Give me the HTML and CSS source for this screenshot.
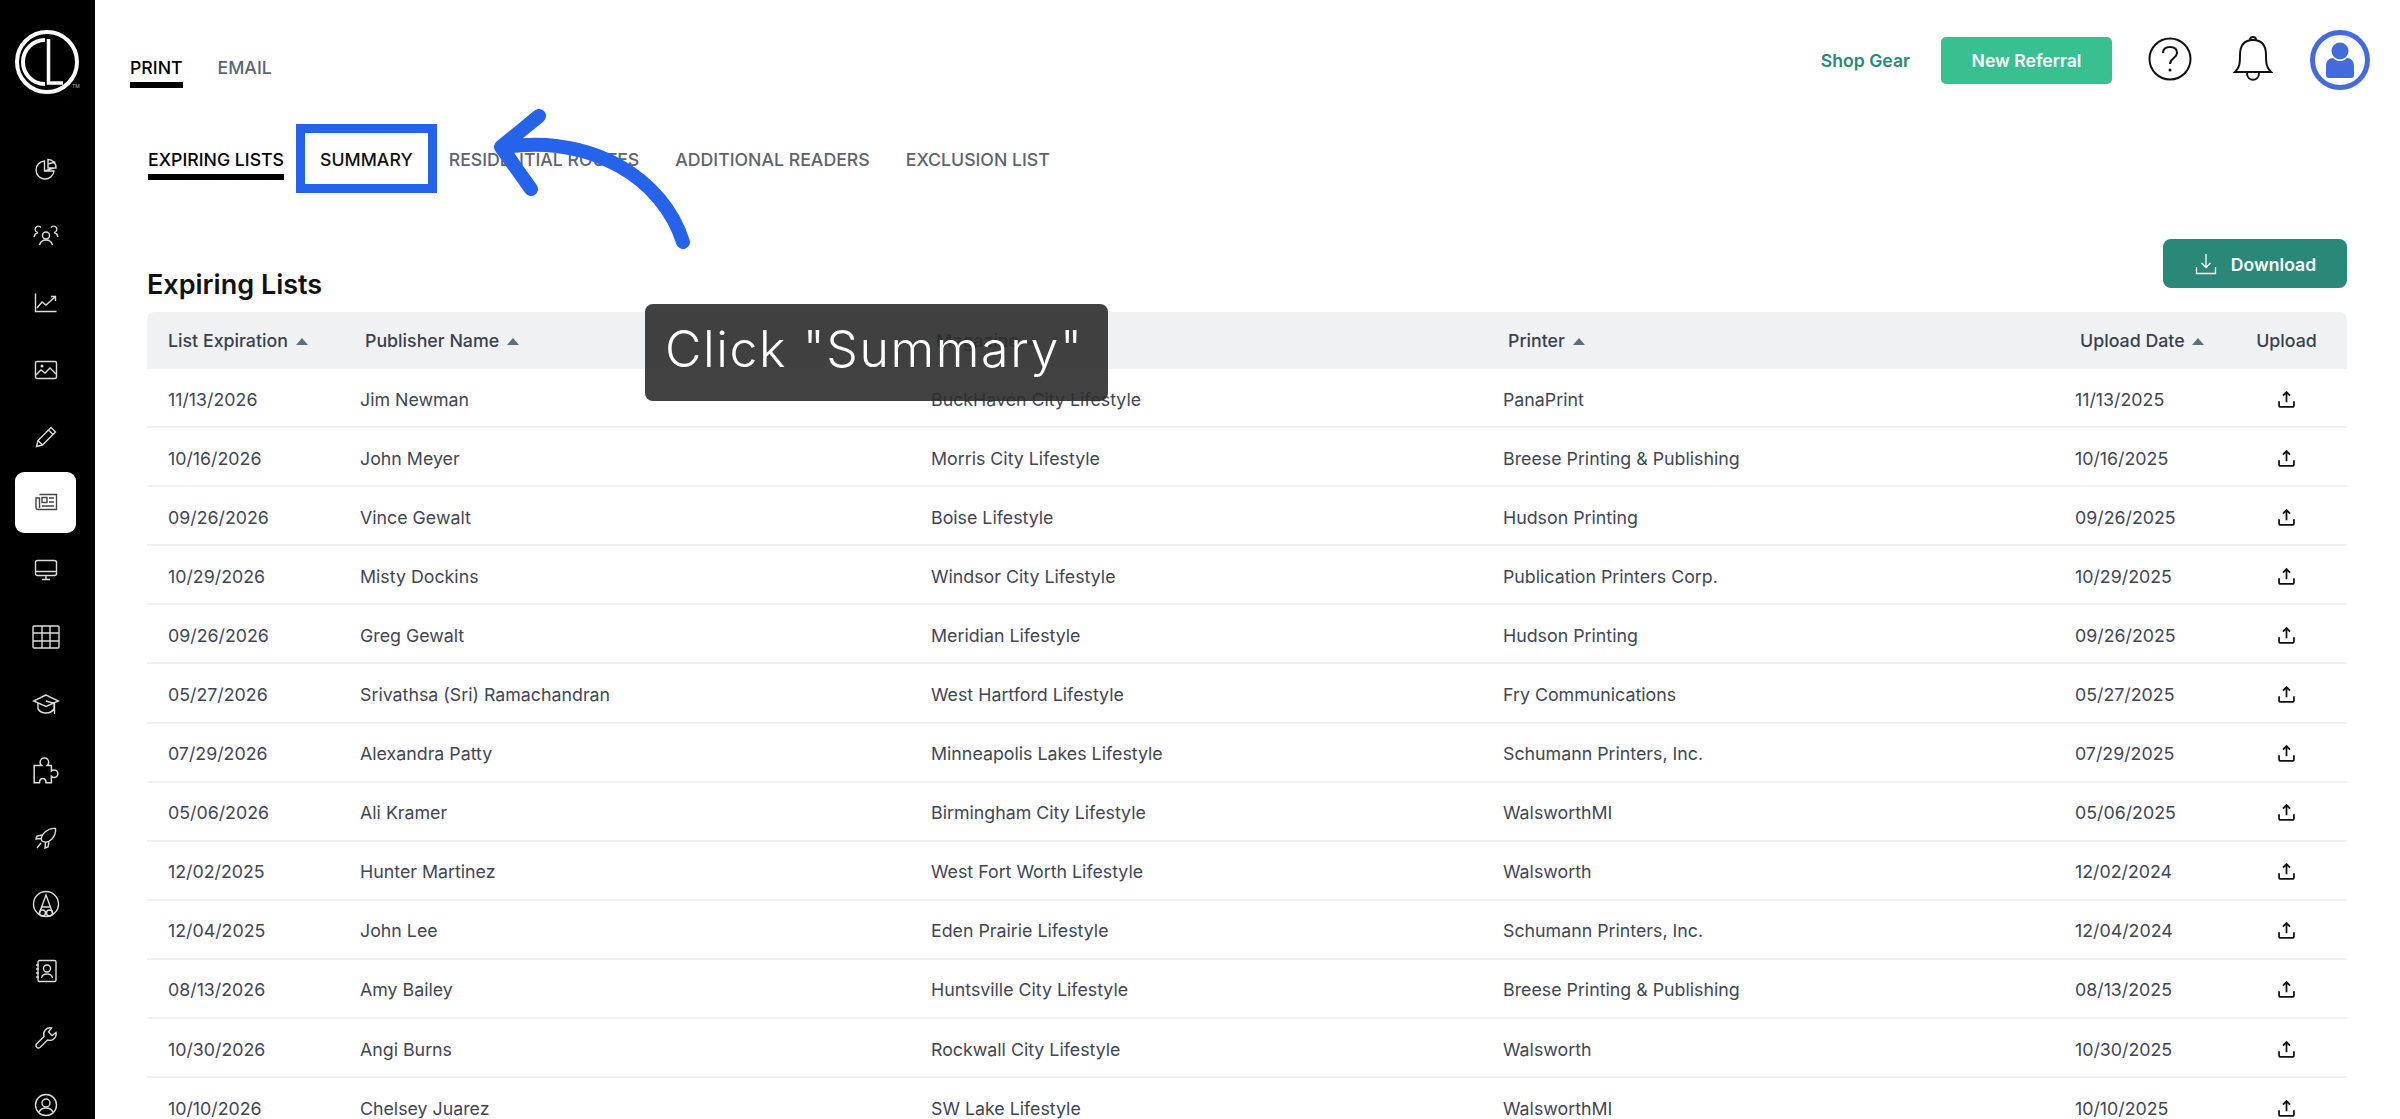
FILE: index.html
```html
<!DOCTYPE html>
<html lang="en">

<head>
    <meta charset="UTF-8">
    <title>Expiring Lists</title>
    <link rel="stylesheet" href="styles.css">
</head>

<body>
    <svg class="sprite" width="0" height="0">
        <symbol id="up" viewBox="0 0 24 24">
            <path d="M12 15V4M8 7.500 12 3.500l4 4M3.500 14v4.500a2 2 0 0 0 2 2h13a2 2 0 0 0 2-2V14" fill="none" stroke="currentColor" stroke-width="2" />
        </symbol>
    </svg>

    <!-- Sidebar -->
    <nav class="sidebar">
        <div class="logo">
            <svg viewBox="0 0 72 68" width="72" height="68" fill="none" stroke="#fff">
                <circle cx="33" cy="33" r="30" stroke-width="4" />
                <path d="M31 11A22 22 0 0 0 31 55" stroke-width="4" />
                <path d="M34.500 10v44H49" stroke-width="3.500" />
                <text x="58" y="59" class="tm">TM</text>
            </svg>
        </div>
        <ul class="nav-list">
            <li><svg viewBox="0 0 24 24"><path d="M10.500 4a9 9 0 1 0 9.500 10h-9.500zM14 2.500a8 8 0 0 1 8 8.500h-8zM14 7l7.500-2M10.500 14l9.500-3" /></svg></li>
            <li><svg viewBox="0 0 28 28" class="wide"><circle cx="14" cy="13.500" r="3.500" /><path d="M7.500 23c1-3.500 3.500-5 6.500-5s5.500 1.500 6.500 5M9 5.500a3.200 3.200 0 1 0-3 5c-2 .5-3.500 2-4 4.500M19 5.500a3.200 3.200 0 1 1 3 5c2 .5 3.500 2 4 4.500" /></svg></li>
            <li><svg viewBox="0 0 24 24"><path d="M1.500 2.500v18h21M3 17l5-6 4 3 9-8M17 5.500h4.500V10" /></svg></li>
            <li><svg viewBox="0 0 24 24"><rect x="1.500" y="3.500" width="21" height="17" rx="1.500" /><path d="M2 17l5-5 4 3 5-5 6 6" /><circle cx="8" cy="8" r=".8" /></svg></li>
            <li><svg viewBox="0 0 24 24"><path d="M2.500 21.500l1.500-6L17 2.500l4.500 4.500L8.500 20zM4 15.500 8.500 20M14.500 5l4.500 4.500" /></svg></li>
            <li class="active"><svg viewBox="0 0 24 24"><path d="M5.500 4.500h17v15H4a2 2 0 0 1-2-2V8h3.500v10" /><rect x="8" y="7.500" width="5" height="5" /><path d="M15 8h5M15 12h5M8 16h12" /></svg></li>
            <li><svg viewBox="0 0 24 24"><rect x="1.500" y="2.500" width="21" height="15" rx="2" /><path d="M1.500 13.500h21M12 17.500v4M8 21.500h8" /></svg></li>
            <li><svg viewBox="0 0 28 24" class="wide"><rect x="1" y="1" width="26" height="22" rx="1" /><path d="M10 1v22M18 1v22M1 8h26M1 16h26" /></svg></li>
            <li><svg viewBox="0 0 28 24" class="wide"><path d="M14 3 1.500 9 14 14.500 26.500 9zM6 11.500V17c2 3 5 4 8 4s6-1 8-4v-5.500M14 9l8.500 2.500V22" /></svg></li>
            <li><svg viewBox="0 0 26 26" class="wide"><path d="M2 8h7c-1-1-1.500-2-1.500-3a4 4 0 0 1 8 0c0 1-.5 2-1.500 3h4v5c1-1 1.500-1 2.500-1a3.500 3.500 0 0 1 0 7c-1 0-1.500 0-2.500-1v6h-5c0-2-1-4-3-4s-3 2-3 4H2z" /></svg></li>
            <li><svg viewBox="0 0 24 24"><path d="M8 15c-2-3 0-6 3-9 3-2.500 7-4 10.500-3.500C22 6 20.500 10 18 13c-3 3-6 4.500-10 2zM8 9l-5 1-1 3 5-.5M15 16l-1 5-3 1 .5-5M7 17l-4 5" /></svg></li>
            <li><svg viewBox="0 0 28 28" class="wide"><circle cx="14" cy="14" r="12.500" /><path d="M7 24 14 5l7 19M10 17h8" /><circle cx="10.500" cy="23" r="3" /><circle cx="17.500" cy="23" r="3" /></svg></li>
            <li><svg viewBox="0 0 24 24"><rect x="4" y="1.500" width="18" height="21" rx="1.500" /><circle cx="13" cy="9.500" r="3.500" /><path d="M7.500 19c.5-3 3-4 5.500-4s5 1 5.500 4M2 6h3M2 10h3M2 14h3M2 18h3" /></svg></li>
            <li><svg viewBox="0 0 24 24"><path d="M22 6.500l-4 3-3.500-3.500 3-4a6.500 6.500 0 0 0-7.500 8.500L2.500 18a2.500 2.500 0 0 0 3.500 3.500l7.500-7.500A6.500 6.500 0 0 0 22 6.500z" /></svg></li>
            <li><svg viewBox="0 0 24 24"><circle cx="12" cy="12" r="10.500" /><circle cx="12" cy="10" r="4" /><path d="M5 19.500c1-3 4-4.500 7-4.500s6 1.500 7 4.500" /></svg></li>
        </ul>
    </nav>

    <main class="main">
        <header class="topbar">
            <div class="tabs">
                <a class="tab current">PRINT</a>
                <a class="tab">EMAIL</a>
            </div>
            <div class="actions">
                <a class="shop-link">Shop Gear</a>
                <a class="btn-referral">New Referral</a>
                <svg class="help-icon" viewBox="0 0 44 48" fill="none" stroke="#111" stroke-width="2">
                    <ellipse cx="22" cy="24" rx="20.500" ry="20.500" />
                    <path d="M15 18c0-4 3-6 7-6s7 2 7 6c0 5-7 5-7 11" />
                    <circle cx="22" cy="35" r="1.500" fill="#111" stroke="none" />
                </svg>
                <svg class="bell-icon" viewBox="0 0 40 46" fill="none" stroke="#111" stroke-width="2">
                    <path d="M2 37c4-4 5-7 5-17C7 10 12 5 20 5s13 5 13 15c0 10 1 13 5 17zM17 5c0-4 6-4 6 0M14 38c0 9 12 9 12 0" />
                </svg>
                <div class="avatar">
                    <svg viewBox="0 0 30 36" width="30" height="36" fill="#436bdc">
                        <circle cx="15" cy="9" r="8.500" />
                        <path d="M1 24c0-5 3-8 7-8 2 2 4 3 7 3s5-1 7-3c4 0 7 3 7 8v9c0 2-1 3-3 3H4c-2 0-3-1-3-3z" />
                    </svg>
                </div>
            </div>
        </header>

        <div class="subtabs">
            <a class="tab current">EXPIRING LISTS</a>
            <a class="tab dark">SUMMARY</a>
            <a class="tab">RESIDENTIAL ROUTES</a>
            <a class="tab">ADDITIONAL READERS</a>
            <a class="tab">EXCLUSION LIST</a>
        </div>

        <div class="title-row">
            <h1>Expiring Lists</h1>
            <a class="btn-download">
                <svg viewBox="0 0 24 24" width="24" height="24" fill="none" stroke="#fff" stroke-width="1.300">
                    <path d="M12 2v13M7.500 11 12 15.500 16.500 11M2.500 15v6.500h19V15" />
                </svg>
                Download
            </a>
        </div>

        <div class="table">
            <div class="row head">
                <div>List Expiration <i class="sort"></i></div>
                <div>Publisher Name <i class="sort"></i></div>
                <div>Magazine <i class="sort"></i></div>
                <div>Printer <i class="sort"></i></div>
                <div>Upload Date <i class="sort"></i></div>
                <div class="upload">Upload</div>
            </div>
            <div class="row"><div>11/13/2026</div><div>Jim Newman</div><div>BuckHaven City Lifestyle</div><div>PanaPrint</div><div>11/13/2025</div><div class="upload"><svg><use href="#up" /></svg></div></div>
            <div class="row"><div>10/16/2026</div><div>John Meyer</div><div>Morris City Lifestyle</div><div>Breese Printing &amp; Publishing</div><div>10/16/2025</div><div class="upload"><svg><use href="#up" /></svg></div></div>
            <div class="row"><div>09/26/2026</div><div>Vince Gewalt</div><div>Boise Lifestyle</div><div>Hudson Printing</div><div>09/26/2025</div><div class="upload"><svg><use href="#up" /></svg></div></div>
            <div class="row"><div>10/29/2026</div><div>Misty Dockins</div><div>Windsor City Lifestyle</div><div>Publication Printers Corp.</div><div>10/29/2025</div><div class="upload"><svg><use href="#up" /></svg></div></div>
            <div class="row"><div>09/26/2026</div><div>Greg Gewalt</div><div>Meridian Lifestyle</div><div>Hudson Printing</div><div>09/26/2025</div><div class="upload"><svg><use href="#up" /></svg></div></div>
            <div class="row"><div>05/27/2026</div><div>Srivathsa (Sri) Ramachandran</div><div>West Hartford Lifestyle</div><div>Fry Communications</div><div>05/27/2025</div><div class="upload"><svg><use href="#up" /></svg></div></div>
            <div class="row"><div>07/29/2026</div><div>Alexandra Patty</div><div>Minneapolis Lakes Lifestyle</div><div>Schumann Printers, Inc.</div><div>07/29/2025</div><div class="upload"><svg><use href="#up" /></svg></div></div>
            <div class="row"><div>05/06/2026</div><div>Ali Kramer</div><div>Birmingham City Lifestyle</div><div>WalsworthMI</div><div>05/06/2025</div><div class="upload"><svg><use href="#up" /></svg></div></div>
            <div class="row"><div>12/02/2025</div><div>Hunter Martinez</div><div>West Fort Worth Lifestyle</div><div>Walsworth</div><div>12/02/2024</div><div class="upload"><svg><use href="#up" /></svg></div></div>
            <div class="row"><div>12/04/2025</div><div>John Lee</div><div>Eden Prairie Lifestyle</div><div>Schumann Printers, Inc.</div><div>12/04/2024</div><div class="upload"><svg><use href="#up" /></svg></div></div>
            <div class="row"><div>08/13/2026</div><div>Amy Bailey</div><div>Huntsville City Lifestyle</div><div>Breese Printing &amp; Publishing</div><div>08/13/2025</div><div class="upload"><svg><use href="#up" /></svg></div></div>
            <div class="row"><div>10/30/2026</div><div>Angi Burns</div><div>Rockwall City Lifestyle</div><div>Walsworth</div><div>10/30/2025</div><div class="upload"><svg><use href="#up" /></svg></div></div>
            <div class="row"><div>10/10/2026</div><div>Chelsey Juarez</div><div>SW Lake Lifestyle</div><div>WalsworthMI</div><div>10/10/2025</div><div class="upload"><svg><use href="#up" /></svg></div></div>
        </div>
    </main>

    <!-- Walkthrough overlay: highlight, arrow and caption -->
    <div class="highlight"></div>
    <svg class="arrow" viewBox="0 0 240 150" width="240" height="150" fill="none" stroke="#2563eb" stroke-width="14" stroke-linecap="round" stroke-linejoin="round">
        <path d="M190 133C170 70 100 25 10 38M46 7 8 38l30 42" />
    </svg>
    <div class="caption">Click "Summary"</div>
</body>

</html>
```

FILE: styles.css
```css
* {
    margin: 0;
    padding: 0;
    box-sizing: border-box;
}

html,
body {
    height: 1119px;
    overflow: hidden;
}

body {
    font-family: 'Inter', sans-serif;
    display: flex;
    background-color: #fff;
    color: #3f4654;
    position: relative;
}

.sprite {
    position: absolute;
}

/* Sidebar */
.sidebar {
    width: 95px;
    flex-shrink: 0;
    background-color: #000;
    display: flex;
    flex-direction: column;
    overflow: hidden;
}

.logo {
    height: 136px;
    flex-shrink: 0;
    padding-top: 29px;
    padding-left: 14px;
}

.tm {
    font-size: 5px;
    fill: #bbb;
    stroke: none;
}

.nav-list {
    list-style: none;
    flex-shrink: 0;
    width: 100%;
}

.nav-list li {
    height: 66.8px;
    display: flex;
    align-items: center;
    justify-content: center;
    padding-right: 3px;
}

.nav-list svg {
    width: 24px;
    height: 24px;
    fill: none;
    stroke: #dcdcdc;
    stroke-width: 1.4;
}

.nav-list svg.wide {
    width: 28px;
    height: 28px;
}

.nav-list li.active {
    width: 61px;
    height: 61px;
    margin: 2px 0 4px 15px;
    padding-right: 0;
    background-color: #fff;
    border-radius: 9px;
}

.nav-list li.active svg {
    stroke: #444;
}

/* Main area */
.main {
    flex: 1;
    min-width: 0;
    padding-right: 53px;
}

.topbar {
    height: 88px;
    padding-left: 35px;
    display: flex;
    justify-content: space-between;
}

.tabs {
    display: flex;
    align-items: flex-end;
    gap: 35px;
}

.tab {
    font-size: 17.7px;
    font-weight: 500;
    line-height: 20px;
    color: #5b6472;
    padding-bottom: 4px;
    border-bottom: 6px solid transparent;
    white-space: nowrap;
}

.tab.current {
    color: #000;
    border-bottom-color: #000;
}

.tab.dark {
    color: #111;
}

.actions {
    display: flex;
    align-items: flex-start;
    padding-top: 37px;
    margin-right: -23px;
}

.shop-link {
    font-size: 17.6px;
    font-weight: 600;
    color: #2a8878;
    line-height: 47px;
    margin-right: 31px;
}

.btn-referral {
    width: 171px;
    height: 47px;
    line-height: 47px;
    text-align: center;
    font-size: 17.6px;
    font-weight: 600;
    color: #fff;
    background-color: #38c090;
    border-radius: 5px;
    margin-right: 36px;
}

.help-icon {
    width: 44px;
    height: 48px;
    margin-right: 41px;
    margin-top: -2px;
}

.bell-icon {
    width: 40px;
    height: 46px;
    margin-right: 37px;
    margin-top: -2px;
}

.avatar {
    width: 60px;
    height: 60px;
    margin-top: -7px;
    border: 5px solid #436bdc;
    border-radius: 50%;
    display: flex;
    align-items: center;
    justify-content: center;
}

.subtabs {
    display: flex;
    gap: 36px;
    margin-top: 62px;
    padding-left: 53px;
}

.title-row {
    height: 60px;
    margin-top: 59px;
    padding-left: 52px;
    display: flex;
    justify-content: space-between;
}

.title-row h1 {
    align-self: flex-end;
    margin-bottom: -2px;
    font-size: 27px;
    font-weight: 600;
    line-height: 32px;
    color: #111;
}

.btn-download {
    width: 184px;
    height: 49px;
    padding-top: 1px;
    display: flex;
    align-items: center;
    justify-content: center;
    gap: 13px;
    font-size: 17.6px;
    font-weight: 600;
    color: #fff;
    background-color: #2a8878;
    border-radius: 8px;
}

/* Table */
.table {
    margin-top: 13px;
    margin-left: 52px;
    font-size: 17.8px;
}

.row {
    display: grid;
    grid-template-columns: 192px 571px 572px 572px 165px 1fr;
    align-items: center;
    height: 59.1px;
    padding-left: 21px;
    padding-top: 3px;
    border-bottom: 2px solid #f0f1f2;
}

.row.head {
    height: 57px;
    padding-top: 0;
    background-color: #eff1f3;
    border-bottom: none;
    border-radius: 8px 8px 0 0;
    font-weight: 500;
    color: #3a414e;
}

.row.head > div + div {
    padding-left: 5px;
}

.row .upload,
.row.head .upload {
    padding-left: 0;
    padding-right: 14px;
    text-align: center;
    color: #111;
}

.row.head .upload {
    color: #3a414e;
}

.upload svg {
    width: 21px;
    height: 21px;
    display: block;
    margin: 0 auto;
}

.sort {
    display: inline-block;
    margin-left: 3px;
    vertical-align: 2px;
    border-left: 6px solid transparent;
    border-right: 6px solid transparent;
    border-bottom: 7px solid #5f6f7a;
}

/* Walkthrough overlay */
.highlight {
    position: absolute;
    left: 296px;
    top: 124px;
    width: 141px;
    height: 69px;
    border: 9px solid #2563eb;
}

.arrow {
    position: absolute;
    left: 493px;
    top: 109px;
}

.caption {
    position: absolute;
    left: 645px;
    top: 304px;
    width: 463px;
    height: 97px;
    line-height: 90px;
    padding-left: 20px;
    background-color: rgba(44, 44, 44, 0.9);
    border-radius: 8px;
    font-family: 'Inter', sans-serif;
    font-size: 50px;
    font-weight: 300;
    letter-spacing: 1.6px;
    color: #fff;
    white-space: nowrap;
}
```
